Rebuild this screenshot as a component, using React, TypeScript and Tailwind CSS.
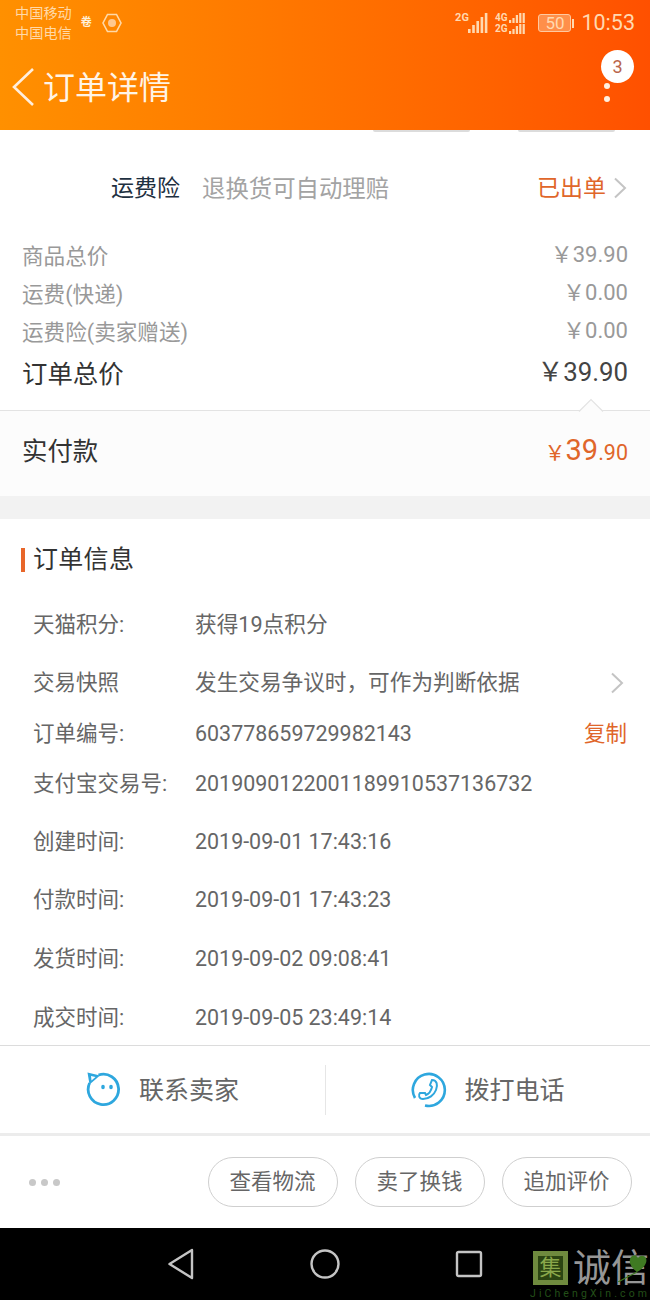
import React from "react";

const F = "font-['Roboto','Noto_Sans_CJK_SC',sans-serif]";

function SignalBars({ bars = [5, 8, 11, 14], h = 16, w = 3, gap = 2 }: { bars?: number[]; h?: number; w?: number; gap?: number }) {
  return (
    <svg width={bars.length * (w + gap)} height={h}>
      {bars.map((b, i) => (
        <rect key={i} x={i * (w + gap)} y={h - b} width={w} height={b} fill="#ffd9b0" />
      ))}
    </svg>
  );
}

function Chevron({ className = "" }: { className?: string }) {
  return (
    <svg width="14" height="22" viewBox="0 0 14 22" fill="none" className={className}>
      <path d="M2 1.5 L12 11 L2 20.5" stroke="#c4c4c4" strokeWidth="2" />
    </svg>
  );
}

function PriceRow({ label, value, h, big }: { label: string; value: string; h: string; big?: boolean }) {
  return (
    <div className={`flex items-center justify-between pr-[22px] pl-[22px] ${h}`}>
      <span className={big ? "text-[25.4px] text-[#333]" : "text-[21.6px] text-[#999]"}>{label}</span>
      <span className={big ? "pb-[4px] text-[25.8px] text-[#444]" : "pb-[5px] text-[22px] text-[#999]"}>{value}</span>
    </div>
  );
}

function InfoRow({ label, value, h, right, cjk }: { label: string; value: string; h: string; right?: React.ReactNode; cjk?: boolean }) {
  return (
    <div className={`flex items-center pr-[23px] pl-[33px] ${h}`}>
      <span className="w-[162px] shrink-0 text-[21.5px] whitespace-nowrap text-[#666]">{label}</span>
      <span className={cjk ? "flex-1 text-[21.65px] whitespace-nowrap text-[#666]" : "flex-1 text-[21.45px] whitespace-nowrap text-[#666]"}>{value}</span>
      {right}
    </div>
  );
}

function Pill({ children }: { children: React.ReactNode }) {
  return (
    <div className="flex h-[50px] w-[130px] items-center justify-center rounded-[25px] border border-[#cfcfcf] pr-[1px] text-[21.5px] text-[#666]">
      {children}
    </div>
  );
}

export default function App() {
  return (
    <div className={`relative flex h-[1300px] w-[650px] flex-col overflow-hidden bg-white ${F}`}>
      {/* Header */}
      <div className="flex h-[130px] shrink-0 flex-col bg-gradient-to-r from-[#ff9000] to-[#ff5000]">
        <div className="flex h-[42px] items-start justify-between pt-[3px] pr-[15px] pl-[15px]">
          <div className="flex items-center">
            <div className="flex flex-col text-[14.2px] leading-[20px] text-[#ffd9a8]">
              <span>中国移动</span>
              <span>中国电信</span>
            </div>
            <span className="ml-[9px] text-[11px] font-bold text-[#fff0d8]">卷</span>
            <svg width="20" height="20" viewBox="0 0 20 20" fill="none" className="-mt-[1px] ml-[10px]">
              <path d="M5.5 1.5 H14.5 L19 10 L14.5 18.5 H5.5 L1 10 Z" stroke="#ffd9a8" strokeWidth="1.6" />
              <circle cx="10" cy="10" r="4" fill="#ffc890" />
            </svg>
          </div>
          <div className="flex items-center pt-[7px] text-[#ffd9b0]">
            <div className="flex items-end">
              <span className="mr-[-1px] mb-[10px] text-[11px] leading-[10px] font-bold">2G</span>
              <SignalBars bars={[4, 8, 12, 16, 20]} h={20} w={2.6} gap={1.6} />
            </div>
            <div className="ml-[6px] flex flex-col">
              <div className="flex items-center gap-[2px] text-[10px] leading-[11px] font-bold">
                <span>4G</span>
                <SignalBars bars={[3, 5, 8, 10, 10]} h={10} w={2.2} gap={1.2} />
              </div>
              <div className="flex items-center gap-[2px] text-[10px] leading-[11px] font-bold">
                <span>2G</span>
                <SignalBars bars={[3, 5, 8, 10, 10]} h={10} w={2.2} gap={1.2} />
              </div>
            </div>
            <div className="ml-[12px] flex items-center">
              <div className="flex h-[18px] w-[33px] items-center justify-center rounded-[3px] border border-[#ffc9a0] bg-[#ff8f4a] text-[17px] leading-none">
                50
              </div>
              <div className="ml-[1px] h-[9px] w-[2px] bg-[#ffd9b0]" />
            </div>
            <span className="ml-[7px] text-[21.5px] leading-[26px]">10:53</span>
          </div>
        </div>
        <div className="relative flex flex-1 items-center pt-[4px] pl-[12px]">
          <svg width="24" height="40" viewBox="0 0 24 40" fill="none">
            <path d="M21 1 L2 19 L21 37" stroke="#ffeedd" strokeWidth="2.6" />
          </svg>
          <span className="ml-[7px] text-[32px] leading-[40px] text-[#fff4e6]">订单详情</span>
          <div className="absolute top-[8px] right-[16px] flex h-[33px] w-[33px] items-center justify-center rounded-full bg-white text-[18px] text-[#b9654a]">
            3
          </div>
          <div className="absolute top-[41px] right-[40px] h-[6px] w-[6px] rounded-full bg-[#fff0e0]" />
          <div className="absolute top-[54px] right-[40px] h-[6px] w-[6px] rounded-full bg-[#fff0e0]" />
        </div>
      </div>

      {/* Clipped buttons from the scrolled-off row */}
      <div className="flex h-[2px] shrink-0 justify-end gap-[48px] pr-[35px]">
        <div className="h-[2px] w-[97px] rounded-b-[30px] border-b-2 border-[#dcdcdc]" />
        <div className="h-[2px] w-[97px] rounded-b-[30px] border-b-2 border-[#dcdcdc]" />
      </div>

      {/* Freight insurance */}
      <div className="flex h-[86px] shrink-0 items-center justify-between pt-[29px] pr-[23px] pl-[111px]">
        <div className="flex items-center">
          <span className="text-[23px] text-[#1e3040]">运费险</span>
          <span className="ml-[22px] text-[23.4px] text-[#a3a3a3]">退换货可自动理赔</span>
        </div>
        <div className="flex items-center">
          <span className="text-[23px] text-[#e0662a]">已出单</span>
          <Chevron className="-mt-[4px] ml-[7px]" />
        </div>
      </div>

      {/* Price rows */}
      <div className="shrink-0 pt-[20px]">
        <PriceRow label="商品总价" value="￥39.90" h="h-[38px]" />
        <PriceRow label="运费(快递)" value="￥0.00" h="h-[38px]" />
        <PriceRow label="运费险(卖家赠送)" value="￥0.00" h="h-[38px]" />
        <PriceRow label="订单总价" value="￥39.90" h="h-[44px]" big />
      </div>

      {/* Paid */}
      <div className="relative mt-[14px] flex h-[86px] shrink-0 items-center justify-between border-t border-[#e3e3e3] bg-[#fcfcfc] pr-[22px] pb-[5px] pl-[22px]">
        <svg width="36" height="14" viewBox="0 0 36 14" className="absolute -top-[13px] right-[41px]">
          <path d="M6 13.5 L18 1.5 L30 13.5" fill="#fcfcfc" stroke="#e3e3e3" strokeWidth="1.2" />
        </svg>
        <span className="text-[25.4px] text-[#333]">实付款</span>
        <span className="flex items-baseline text-[#e0662a]">
          <span className="text-[21px]">￥</span>
          <span className="text-[29px]">39</span>
          <span className="text-[21.5px]">.90</span>
        </span>
      </div>
      <div className="h-[23px] shrink-0 bg-[#f2f2f2]" />

      {/* Order info */}
      <div className="flex h-[81px] shrink-0 items-center pl-[21px]">
        <div className="h-[24px] w-[4px] bg-[#e8662a]" />
        <span className="ml-[8px] text-[25px] tracking-[0.3px] text-[#333]">订单信息</span>
      </div>
      <div className="shrink-0">
        <InfoRow label="天猫积分:" value="获得19点积分" h="h-[50px]" cjk />
        <InfoRow label="交易快照" value="发生交易争议时，可作为判断依据" h="h-[66px]" cjk right={<Chevron className="mr-[3px]" />} />
        <InfoRow label="订单编号:" value="603778659729982143" h="h-[36px]" right={<span className="text-[21.5px] text-[#e0662a]">复制</span>} />
        <InfoRow label="支付宝交易号:" value="2019090122001189910537136732" h="h-[64px]" />
        <InfoRow label="创建时间:" value="2019-09-01 17:43:16" h="h-[52px]" />
        <InfoRow label="付款时间:" value="2019-09-01 17:43:23" h="h-[65px]" />
        <InfoRow label="发货时间:" value="2019-09-02 09:08:41" h="h-[53px]" />
        <InfoRow label="成交时间:" value="2019-09-05 23:49:14" h="h-[59px] pt-[5px]" />
      </div>

      {/* Contact */}
      <div className="flex h-[91px] shrink-0 items-center border-t border-b-[3px] border-t-[#dcdcdc] border-b-[#ececec]">
        <div className="flex h-[50px] w-[326px] items-center justify-center gap-[17px] border-r border-[#e6e6e6]">
          <svg width="36" height="36" viewBox="0 0 36 36" fill="none">
            <path d="M12.5 3 A15.2 15.2 0 1 1 3.6 11" stroke="#2ea7de" strokeWidth="2.8" />
            <path d="M1.5 0.5 L14 3.6 L3.5 12.5 Z" fill="#2ea7de" />
            <path d="M5 4 L9.5 5 L5.5 8.5 Z" fill="#ffffff" />
            <ellipse cx="17" cy="15" rx="1.8" ry="2.2" fill="#2ea7de" />
            <ellipse cx="25" cy="15" rx="1.8" ry="2.2" fill="#2ea7de" />
          </svg>
          <span className="mt-[2px] text-[25px] text-[#666]">联系卖家</span>
        </div>
        <div className="flex h-[50px] flex-1 items-center justify-center gap-[17px]">
          <svg width="36" height="36" viewBox="0 0 36 36" fill="none">
            <path d="M4 26 A16 16 0 1 1 14 33.5" stroke="#2ea7de" strokeWidth="2.6" />
            <path d="M21 8 C26 8 27 13 25 18 C23 23 18 27 12 27 C8 27 7 23 9 21 L14 21 L15 23 C18 22 20 19 21 15 L19 13 Z" stroke="#2ea7de" strokeWidth="2" />
          </svg>
          <span className="mt-[2px] text-[25px] text-[#666]">拨打电话</span>
        </div>
      </div>

      {/* Actions */}
      <div className="flex h-[92px] shrink-0 items-center pr-[18px] pl-[29px]">
        <div className="flex gap-[5px]">
          <div className="h-[7px] w-[7px] rounded-full bg-[#c8c8c8]" />
          <div className="h-[7px] w-[7px] rounded-full bg-[#c8c8c8]" />
          <div className="h-[7px] w-[7px] rounded-full bg-[#c8c8c8]" />
        </div>
        <div className="ml-auto flex gap-[17px]">
          <Pill>查看物流</Pill>
          <Pill>卖了换钱</Pill>
          <Pill>追加评价</Pill>
        </div>
      </div>

      {/* Nav */}
      <div className="relative flex flex-1 items-center bg-black">
        <div className="flex w-full items-center pl-[167px]">
          <svg width="28" height="32" viewBox="0 0 28 32" fill="none">
            <path d="M25 2 L2.5 16 L25 30 Z" stroke="#c4c4c4" strokeWidth="2.4" strokeLinejoin="round" />
          </svg>
          <svg width="30" height="30" viewBox="0 0 30 30" fill="none" className="ml-[115px]">
            <circle cx="15" cy="15" r="13.5" stroke="#c4c4c4" strokeWidth="2.4" />
          </svg>
          <svg width="28" height="28" viewBox="0 0 28 28" fill="none" className="ml-[115px]">
            <rect x="2" y="2" width="24" height="24" rx="1.5" stroke="#c4c4c4" strokeWidth="2.4" />
          </svg>
        </div>
        <div className="absolute top-[23px] left-[533px] flex h-[34px] w-[35px] items-center justify-center border-[5px] border-[#6f8a3e] bg-[#2c4512] text-[22px] leading-none text-[#8aa84a]">
          集
        </div>
        <span className="absolute top-[23px] left-[573px] text-[38px] leading-[34px] whitespace-nowrap text-[#969696]">诚信</span>
        <svg width="34" height="32" viewBox="0 0 34 32" className="absolute top-[22px] left-[617px]">
          <path d="M20 22 C12 16 11 9 15 6 C18 4 20 6 21 8 C23 5 27 5 29 8 C31 13 26 19 20 22 Z" fill="#3f7a22" />
          <path d="M20 22 L1 32" stroke="#3f7a22" strokeWidth="1.2" />
        </svg>
        <span className="absolute top-[60px] left-[530px] text-[10.5px] leading-[12px] tracking-[3.1px] whitespace-nowrap text-[#234f18]">
          JiChengXin.com
        </span>
      </div>
    </div>
  );
}
